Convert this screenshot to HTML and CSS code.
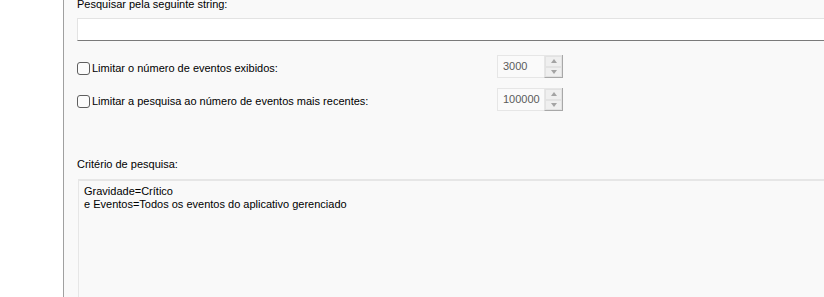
FILE: index.html
```html
<!DOCTYPE html>
<html lang="pt">
<head>
    <meta charset="UTF-8">
    <title>Filtro de eventos</title>
    <link rel="stylesheet" href="styles.css">
</head>
<body>
    <div class="window">
        <div class="side"></div>
        <div class="panel">
            <div class="label top">Pesquisar pela seguinte string:</div>
            <div class="text-input"></div>

            <div class="limit-row first">
                <label class="check"><span class="box"></span>Limitar o número de eventos exibidos:</label>
                <div class="spin">
                    <span class="spin-value">3000</span>
                    <span class="spin-buttons">
                        <span class="spin-btn"><span class="arrow up"></span></span>
                        <span class="spin-btn"><span class="arrow down"></span></span>
                    </span>
                </div>
            </div>

            <div class="limit-row">
                <label class="check"><span class="box"></span>Limitar a pesquisa ao número de eventos mais recentes:</label>
                <div class="spin">
                    <span class="spin-value">100000</span>
                    <span class="spin-buttons">
                        <span class="spin-btn"><span class="arrow up"></span></span>
                        <span class="spin-btn"><span class="arrow down"></span></span>
                    </span>
                </div>
            </div>

            <div class="label criteria-label">Critério de pesquisa:</div>
            <div class="criteria">
                <div>Gravidade=Crítico</div>
                <div>e Eventos=Todos os eventos do aplicativo gerenciado</div>
            </div>
        </div>
    </div>
</body>
</html>
```

FILE: styles.css
```css
html, body {
    margin: 0;
    padding: 0;
    overflow: hidden;
    background: #ffffff;
}
body {
    font-family: 'Liberation Sans', Arial, sans-serif;
    font-size: 11px;
    line-height: 13px;
    color: #000;
}
.window {
    display: flex;
    width: 1000px;
    height: 297px;
}
.side {
    width: 63px;
    background: #ffffff;
    border-right: 1px solid #a0a0a0;
    flex-shrink: 0;
}
.panel {
    flex: 1;
    background: #f9f9f9;
    padding-left: 13px;
    display: flex;
    flex-direction: column;
}
.label {
    height: 13px;
}
.label.top {
    margin-top: -2px;
}
.text-input {
    margin-top: 7px;
    height: 21px;
    background: #ffffff;
    border: 1px solid #e3e3e3;
    border-bottom-color: #7a7a7a;
}
.limit-row {
    display: grid;
    grid-template-columns: 420px 66px;
    align-items: center;
    height: 23px;
    margin-top: 10px;
}
.limit-row.first {
    margin-top: 14px;
}
.check {
    display: flex;
    align-items: center;
    padding-top: 3px;
}
.box {
    width: 11px;
    height: 11px;
    border: 1px solid #5f5f5f;
    border-radius: 3px;
    background: #fcfcfc;
    margin-right: 2px;
}
.spin {
    display: flex;
    height: 21px;
    border: 1px solid #e6e6e6;
    background: #fafafa;
}
.spin-value {
    flex: 1;
    padding-left: 5px;
    line-height: 21px;
    color: #5a5a5a;
}
.spin-buttons {
    width: 17px;
    display: flex;
    flex-direction: column;
    border-left: 1px solid #e6e6e6;
    border-right: 1px solid #a8a8a8;
    border-bottom: 1px solid #a8a8a8;
    margin: -1px -1px -1px 0;
    padding-top: 1px;
}
.spin-btn {
    flex: 1;
    display: flex;
    align-items: center;
    justify-content: center;
    background: #efefef;
    border: 1px solid #e2e2e2;
}
.arrow {
    width: 0;
    height: 0;
    border-left: 3px solid transparent;
    border-right: 3px solid transparent;
}
.arrow.up {
    border-bottom: 4px solid #a3a3a3;
}
.arrow.down {
    border-top: 4px solid #a3a3a3;
}
.criteria-label {
    margin-top: 47px;
}
.criteria {
    margin-top: 8px;
    margin-left: 1px;
    flex: 1;
    border-top: 2px solid #e6e6e6;
    border-left: 1px solid #e6e6e6;
    padding: 4px 5px;
}
```
